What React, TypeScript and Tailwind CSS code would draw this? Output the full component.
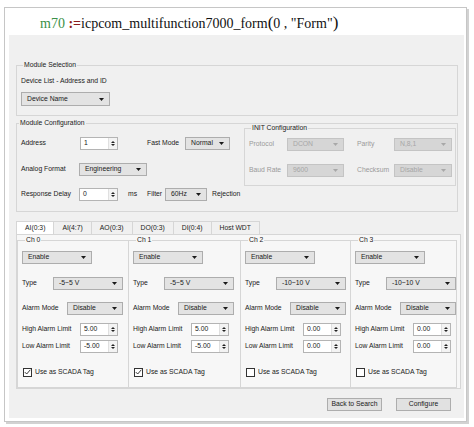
import React from 'react';

type Opt = { children?: React.ReactNode; w: string; h?: string; disabled?: boolean };

function Arrow({ disabled }: { disabled?: boolean }) {
  return (
    <svg width="5" height="3" viewBox="0 0 5 3" className="shrink-0">
      <path d="M0 0h5L2.5 3z" fill={disabled ? '#a8a8a8' : '#1a1a1a'} />
    </svg>
  );
}

function Combo({ children, w, h = 'h-[13px]', disabled }: Opt) {
  return (
    <div
      className={`${w} ${h} flex items-center justify-between border pl-[5px] pr-[5px] ${
        disabled ? 'bg-[#d6d6d6] border-[#c4c4c4] text-[#a6a6a6]' : 'bg-[#e3e3e3] border-[#adadad] text-[#1a1a1a]'
      }`}
    >
      <span className="leading-none">{children}</span>
      <Arrow disabled={disabled} />
    </div>
  );
}

function Spin({ value, w }: { value: string; w: string }) {
  return (
    <div className={`${w} h-[13px] flex items-stretch border border-[#b4b4b4] bg-white`}>
      <span className="flex-1 pl-[3px] flex items-center leading-none">{value}</span>
      <div className="w-[9px] flex flex-col items-center justify-center gap-[1px] border-l border-[#e0e0e0] bg-[#f3f3f3]">
        <svg width="4" height="2" viewBox="0 0 4 2">
          <path d="M0 2h4L2 0z" fill="#222" />
        </svg>
        <svg width="4" height="2" viewBox="0 0 4 2">
          <path d="M0 0h4L2 2z" fill="#222" />
        </svg>
      </div>
    </div>
  );
}

function Check({ checked }: { checked: boolean }) {
  return (
    <div className="w-[9px] h-[9px] border border-[#333] bg-white flex items-center justify-center">
      {checked && (
        <svg width="7" height="6" viewBox="0 0 7 6">
          <path d="M0.8 3.1L2.7 5L6.3 0.8" stroke="#222" strokeWidth="0.9" fill="none" />
        </svg>
      )}
    </div>
  );
}

type Channel = { name: string; type: string; high: string; low: string; scada: boolean };

const channels: Channel[] = [
  { name: 'Ch 0', type: '-5~5 V', high: '5.00', low: '-5.00', scada: true },
  { name: 'Ch 1', type: '-5~5 V', high: '5.00', low: '-5.00', scada: true },
  { name: 'Ch 2', type: '-10~10 V', high: '0.00', low: '0.00', scada: false },
  { name: 'Ch 3', type: '-10~10 V', high: '0.00', low: '0.00', scada: false },
];

const colWidths = ['w-[111px]', 'w-[112px]', 'w-[110px]', 'w-[107px]'];

const tabs = ['AI(0:3)', 'AI(4:7)', 'AO(0:3)', 'DO(0:3)', 'DI(0:4)', 'Host WDT'];

function ChannelBox({ ch, idx }: { ch: Channel; idx: number }) {
  return (
    <fieldset
      className={`${colWidths[idx]} border-t border-b border-l ${idx === 3 ? 'border-r' : ''} border-[#d6d6d6] pl-[4px] pb-[10px]`}
    >
      <legend className="ml-[3px] px-[1px] leading-[8px]">{ch.name}</legend>
      <div className="mt-[7px]">
        <Combo w="w-[70px]">Enable</Combo>
      </div>
      <div className="mt-[13px] flex items-center">
        <span className="w-[31px]">Type</span>
        <Combo w="w-[70px]">{ch.type}</Combo>
      </div>
      <div className="mt-[12px] flex items-center">
        <span className="w-[45px]">Alarm Mode</span>
        <Combo w="w-[56px]">Disable</Combo>
      </div>
      <div className="mt-[8px] flex items-center">
        <span className="w-[58px]">High Alarm Limit</span>
        <Spin value={ch.high} w="w-[38px]" />
      </div>
      <div className="mt-[4px] flex items-center">
        <span className="w-[58px]">Low Alarm Limit</span>
        <Spin value={ch.low} w="w-[38px]" />
      </div>
      <div className="mt-[14px] h-[10px] flex items-center gap-[3px] pl-[1px]">
        <Check checked={ch.scada} />
        <span>Use as SCADA Tag</span>
      </div>
    </fieldset>
  );
}

export default function App() {
  return (
    <div className="w-[474px] h-[427px] bg-white overflow-hidden pt-[7px] pl-[4px]">
      <div className="w-[463px] h-[415px] border border-[#c6c6c6] shadow-[2px_2px_0_#d2d2d2] bg-white">
        <div className="h-[27px] pl-[35px] pt-[4px] font-['Liberation_Serif',serif] text-[14px] leading-[22px] text-[#111] whitespace-nowrap">
          <span className="text-[#3a9048]">m70</span> <span className="text-[#8a1c1c] font-bold">:=</span>
          icpcom_multifunction7000_form<span className="text-[17px]">(</span>0 , "Form"
          <span className="text-[17px]">)</span>
        </div>

        <div className="ml-[4px] w-[455px] h-[383px] bg-[#f0f0f0] font-['Liberation_Sans',Arial,sans-serif] text-[6.8px] text-[#1a1a1a] pt-[26px]">
          <fieldset className="ml-[7px] w-[442px] border border-[#d6d6d6] pl-[4px] pb-[9px]">
            <legend className="ml-[2px] px-[1px] leading-[8px]">Module Selection</legend>
            <div className="mt-[8px] leading-[8px]">Device List - Address and ID</div>
            <div className="mt-[7px]">
              <Combo w="w-[89px]" h="h-[14px]">
                Device Name
              </Combo>
            </div>
          </fieldset>

          <fieldset className="mt-[3px] ml-[7px] w-[442px] border border-[#d6d6d6] pb-[10px]">
            <legend className="ml-[2px] px-[1px] leading-[8px]">Module Configuration</legend>
            <div className="flex items-start">
              <div className="w-[227px] pl-[4px]">
                <div className="mt-[10px] flex items-center">
                  <span className="w-[59px]">Address</span>
                  <Spin value="1" w="w-[38px]" />
                  <span className="ml-[29px] w-[38px]">Fast Mode</span>
                  <Combo w="w-[45px]">Normal</Combo>
                </div>
                <div className="mt-[13px] flex items-center">
                  <span className="w-[58px]">Analog Format</span>
                  <Combo w="w-[68px]">Engineering</Combo>
                </div>
                <div className="mt-[12px] flex items-center">
                  <span className="w-[58px]">Response Delay</span>
                  <Spin value="0" w="w-[39px]" />
                  <span className="ml-[10px] w-[19px]">ms</span>
                  <span className="w-[18px]">Filter</span>
                  <Combo w="w-[42px]">60Hz</Combo>
                  <span className="ml-[5px]">Rejection</span>
                </div>
              </div>

              <fieldset className="-mt-[3px] w-[212px] border border-[#d6d6d6] pl-[4px] pb-[8px]">
                <legend className="ml-[2px] px-[1px] leading-[8px]">INIT Configuration</legend>
                <div className="mt-[6px] flex items-center text-[#9a9a9a]">
                  <span className="w-[38px]">Protocol</span>
                  <Combo w="w-[57px]" disabled>
                    DCON
                  </Combo>
                  <span className="ml-[13px] w-[37px]">Parity</span>
                  <Combo w="w-[58px]" disabled>
                    N,8,1
                  </Combo>
                </div>
                <div className="mt-[13px] flex items-center text-[#9a9a9a]">
                  <span className="w-[38px]">Baud Rate</span>
                  <Combo w="w-[57px]" disabled>
                    9600
                  </Combo>
                  <span className="ml-[13px] w-[37px]">Checksum</span>
                  <Combo w="w-[58px]" disabled>
                    Disable
                  </Combo>
                </div>
              </fieldset>
            </div>
          </fieldset>

          <div className="mt-[9px] ml-[7px] flex h-[13px] items-end">
            {tabs.map((t, i) => (
              <div
                key={t}
                className={`h-[13px] px-[8px] flex items-center border-t border-r border-[#d6d6d6] ${
                  i === 0 ? 'border-l bg-white' : 'bg-[#f0f0f0]'
                }`}
              >
                {t}
              </div>
            ))}
          </div>
          <div className="ml-[7px] w-[445px] h-[155px] border border-[#d6d6d6] bg-[#f7f7f7] pt-[1px] flex">
            {channels.map((ch, i) => (
              <ChannelBox key={ch.name} ch={ch} idx={i} />
            ))}
          </div>

          <div className="mt-[9px] pr-[13px] flex justify-end gap-[14px]">
            <button className="w-[55px] h-[13px] bg-[#e1e1e1] border border-[#adadad] leading-none">Back to Search</button>
            <button className="w-[55px] h-[13px] bg-[#e1e1e1] border border-[#adadad] leading-none">Configure</button>
          </div>
        </div>
      </div>
    </div>
  );
}
